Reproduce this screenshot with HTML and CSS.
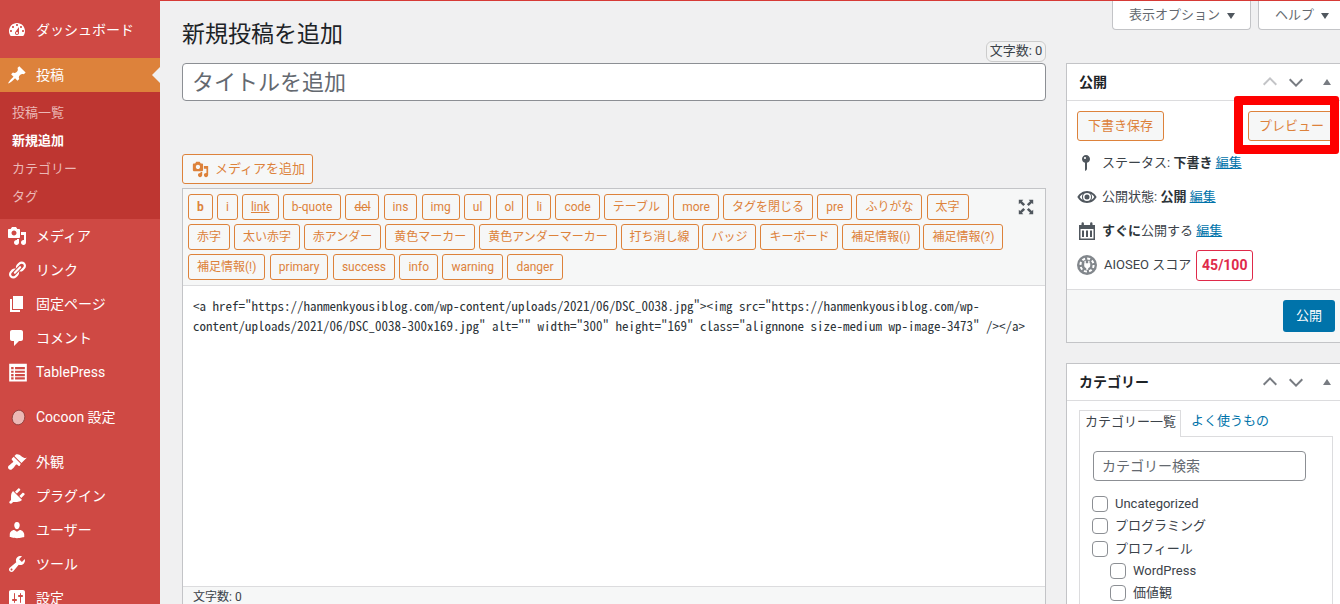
FILE: index.html
```html
<!DOCTYPE html>
<html lang="ja">
<head>
<meta charset="utf-8">
<title>新規投稿を追加</title>
<link rel="stylesheet" href="styles.css">
</head>
<body>
<div class="app">
  <aside class="side">
    <nav class="menu">
      <a class="item"><svg class="ic" viewBox="0 0 20 20"><path d="M3.76 16h12.48c1.1-1.37 1.76-3.11 1.76-5 0-4.42-3.58-8-8-8s-8 3.58-8 8c0 1.89.66 3.63 1.76 5zM10 4c.55 0 1 .45 1 1s-.45 1-1 1-1-.45-1-1 .45-1 1-1zM6 6c.55 0 1 .45 1 1s-.45 1-1 1-1-.45-1-1 .45-1 1-1zm8 0c.55 0 1 .45 1 1s-.45 1-1 1-1-.45-1-1 .45-1 1-1zm-5.37 5.55L12 7v6c0 1.1-.9 2-2 2s-2-.9-2-2c0-.57.24-1.08.63-1.45zM4 10c.55 0 1 .45 1 1s-.45 1-1 1-1-.45-1-1 .45-1 1-1zm12 0c.55 0 1 .45 1 1s-.45 1-1 1-1-.45-1-1 .45-1 1-1zm-5 3c0-.55-.45-1-1-1s-1 .45-1 1 .45 1 1 1 1-.45 1-1z"/></svg><span>ダッシュボード</span></a>
      <div class="sep"></div>
      <a class="item active"><svg class="ic" viewBox="0 0 20 20"><path d="M10.44 3.02l1.82-1.82 6.36 6.35-1.83 1.82c-1.05-.68-2.48-.57-3.41.36l-.75.75c-.92.93-1.04 2.35-.35 3.41l-1.83 1.82-2.41-2.41-2.8 2.79c-.42.42-3.38 2.71-3.8 2.29s1.86-3.39 2.28-3.81l2.79-2.79L4.1 9.36l1.83-1.82c1.05.69 2.48.57 3.4-.36l.75-.75c.93-.92 1.05-2.35.36-3.41z"/></svg><span>投稿</span></a>
      <div class="sub">
        <a>投稿一覧</a>
        <a class="cur">新規追加</a>
        <a>カテゴリー</a>
        <a>タグ</a>
      </div>
      <a class="item"><svg class="ic" viewBox="0 0 20 20"><path d="M13 11V4c0-.55-.45-1-1-1h-1.67L9 1H5L3.67 3H2c-.55 0-1 .45-1 1v7c0 .55.45 1 1 1h10c.55 0 1-.45 1-1zM7 4.5c1.38 0 2.5 1.12 2.5 2.5S8.38 9.5 7 9.5 4.5 8.38 4.5 7 5.62 4.5 7 4.5zM14 6h5v10.5c0 1.38-1.12 2.5-2.5 2.5S14 17.88 14 16.5s1.12-2.5 2.5-2.5c.17 0 .34.02.5.05V9h-3V6zm-4 8.05V13h2v3.5c0 1.38-1.12 2.5-2.5 2.5S7 17.88 7 16.5 8.12 14 9.5 14c.17 0 .34.02.5.05z"/></svg><span>メディア</span></a>
      <a class="item"><svg class="ic" viewBox="0 0 20 20"><path d="M17.74 2.76c1.68 1.69 1.68 4.41 0 6.1l-1.53 1.52c-1.12 1.12-2.7 1.47-4.14 1.09l2.62-2.61.76-.77.76-.76c.84-.84.84-2.2 0-3.04-.84-.85-2.2-.85-3.04 0l-.77.76-3.38 3.38c-.37-1.44-.02-3.02 1.1-4.14l1.52-1.53c1.69-1.68 4.42-1.68 6.1 0zM8.59 13.43l5.34-5.34c.42-.42.42-1.1 0-1.52-.44-.43-1.13-.39-1.53 0l-5.33 5.34c-.42.42-.42 1.1 0 1.52.44.43 1.13.39 1.52 0zm-.76 2.29l4.14-4.15c.38 1.44.03 3.02-1.09 4.14l-1.52 1.53c-1.69 1.68-4.41 1.68-6.1 0-1.68-1.68-1.68-4.42 0-6.1l1.53-1.52c1.12-1.12 2.7-1.47 4.14-1.1l-4.14 4.15c-.85.84-.85 2.2 0 3.05.84.84 2.2.84 3.04 0z"/></svg><span>リンク</span></a>
      <a class="item"><svg class="ic" viewBox="0 0 20 20"><path d="M6 15V2h10v13H6zm-1 1h8v2H3V5h2v11z"/></svg><span>固定ページ</span></a>
      <a class="item"><svg class="ic" viewBox="0 0 20 20"><path d="M5 2h9c1.1 0 2 .9 2 2v7c0 1.1-.9 2-2 2h-2l-5 5v-5H5c-1.1 0-2-.9-2-2V4c0-1.1.9-2 2-2z"/></svg><span>コメント</span></a>
      <a class="item"><svg class="ic" viewBox="0 0 20 20"><path transform="translate(1.2 .8) scale(.98)" fill-rule="evenodd" d="M1 1h18v18H1zM3 4.400v2.200h2.500V4.400zm4 0v2.200h10V4.400zM3 8v2.200h2.500V8zm4 0v2.200h10V8zM3 11.400v2.200h2.500v-2.200zm4 0v2.200h10v-2.200zM3 14.800V17h2.500v-2.200zm4 0V17h10v-2.200z"/></svg><span>TablePress</span></a>
      <div class="sep"></div>
      <a class="item"><svg class="ic" viewBox="0 0 20 20"><ellipse class="egg" cx="11.500" cy="10.500" rx="6.200" ry="7.400" transform="rotate(16 11.500 10.500)"/></svg><span>Cocoon 設定</span></a>
      <div class="sep"></div>
      <a class="item"><svg class="ic" viewBox="0 0 20 20"><path d="M14.48 11.06L7.41 3.99l1.5-1.5c.5-.56 2.3-.47 3.51.32 1.21.8 1.43 1.28 2.91 2.1 1.18.64 2.45 1.26 4.45.85zm-.71.71L6.7 4.7 4.93 6.47c-.39.39-.39 1.02 0 1.41l1.06 1.06c.39.39.39 1.03 0 1.42-.6.6-1.43 1.11-2.21 1.69-.35.26-.7.53-1.01.84C1.43 13.71.96 14.6 1 15.3c.04.7.3 1.3.7 1.7.4.4 1 .66 1.7.7.7.04 1.6-.43 2.97-1.78.3-.31.58-.66.84-1.01.58-.78 1.09-1.61 1.69-2.21.39-.39 1.03-.39 1.42 0l1.06 1.06c.39.39 1.02.39 1.41 0z"/></svg><span>外観</span></a>
      <a class="item"><svg class="ic" viewBox="0 0 20 20"><path d="M13.11 4.36L9.87 7.6 8 5.73l3.24-3.24c.35-.34 1.05-.2 1.56.32.52.51.66 1.21.31 1.55zm-8 1.77l.91-1.12 9.01 9.01-1.19.84c-.71.71-2.63 1.16-3.82 1.16H6.14L4.9 17.26c-.59.59-1.54.59-2.12 0-.59-.58-.59-1.53 0-2.12l1.24-1.24v-3.88c0-1.13.4-3.19 1.09-3.89zm7.26 3.97l3.24-3.24c.34-.35 1.04-.21 1.55.31.52.51.66 1.21.31 1.55l-3.24 3.25z"/></svg><span>プラグイン</span></a>
      <a class="item"><svg class="ic" viewBox="0 0 20 20"><path d="M10 9.25c-2.27 0-2.73-3.44-2.73-3.44C7 4.02 7.82 2 9.97 2c2.16 0 2.98 2.02 2.71 3.81 0 0-.41 3.44-2.68 3.44zm0 2.57L12.72 10c2.39 0 4.52 2.33 4.52 4.53v2.49s-3.65 1.13-7.24 1.13c-3.65 0-7.24-1.13-7.24-1.13v-2.49c0-2.25 1.94-4.48 4.47-4.48z"/></svg><span>ユーザー</span></a>
      <a class="item"><svg class="ic" viewBox="0 0 20 20"><path d="M16.68 9.77c-1.34 1.34-3.3 1.67-4.95.99l-5.41 6.52c-.99.99-2.59.99-3.58 0s-.99-2.59 0-3.57l6.52-5.42c-.68-1.65-.35-3.61.99-4.95 1.28-1.28 3.12-1.62 4.72-1.06l-2.89 2.89 2.82 2.82 2.86-2.87c.53 1.58.18 3.39-1.08 4.65zM3.81 16.21c.4.39 1.04.39 1.43 0 .4-.4.4-1.04 0-1.43-.39-.4-1.03-.4-1.43 0-.39.39-.39 1.03 0 1.43z"/></svg><span>ツール</span></a>
      <a class="item"><svg class="ic" viewBox="0 0 20 20"><path d="M18 16V4c0-1.1-.9-2-2-2H4c-1.1 0-2 .9-2 2v12c0 1.1.9 2 2 2h12c1.1 0 2-.9 2-2zM8 11h1c.55 0 1 .45 1 1s-.45 1-1 1H8v1.5c0 .28-.22.5-.5.5s-.5-.22-.5-.5V13H6c-.55 0-1-.45-1-1s.45-1 1-1h1V5.5c0-.28.22-.5.5-.5s.5.22.5.5V11zm5-2h-1c-.55 0-1-.45-1-1s.45-1 1-1h1V5.5c0-.28.22-.5.5-.5s.5.22.5.5V7h1c.55 0 1 .45 1 1s-.45 1-1 1h-1v5.5c0 .28-.22.5-.5.5s-.5-.22-.5-.5V9z"/></svg><span>設定</span></a>
    </nav>
  </aside>
  <main class="main">
    <div class="screen-tabs">
      <button class="stab">表示オプション<i class="tri"></i></button>
      <button class="stab stab-help">ヘルプ<i class="tri"></i></button>
    </div>
    <div class="cols">
      <section class="left">
        <h1 class="title">新規投稿を追加</h1>
        <div class="count-tip">文字数: 0</div>
        <div class="title-input">タイトルを追加</div>
        <button class="media-btn"><svg class="media-ic" viewBox="0 0 20 20"><path d="M13 11V4c0-.55-.45-1-1-1h-1.67L9 1H5L3.67 3H2c-.55 0-1 .45-1 1v7c0 .55.45 1 1 1h10c.55 0 1-.45 1-1zM7 4.5c1.38 0 2.5 1.12 2.5 2.5S8.38 9.5 7 9.5 4.5 8.38 4.5 7 5.62 4.5 7 4.5zM14 6h5v10.5c0 1.38-1.12 2.5-2.5 2.5S14 17.88 14 16.5s1.12-2.5 2.5-2.5c.17 0 .34.02.5.05V9h-3V6zm-4 8.05V13h2v3.5c0 1.38-1.12 2.5-2.5 2.5S7 17.88 7 16.5 8.12 14 9.5 14c.17 0 .34.02.5.05z"/></svg>メディアを追加</button>
        <div class="editor">
          <div class="toolbar">
            <div class="qt">
              <div class="qt-row"><button class="qb strong">b</button><button class="qb">i</button><button class="qb under">link</button><button class="qb">b-quote</button><button class="qb strike">del</button><button class="qb">ins</button><button class="qb">img</button><button class="qb">ul</button><button class="qb">ol</button><button class="qb">li</button><button class="qb">code</button><button class="qb">テーブル</button><button class="qb">more</button><button class="qb">タグを閉じる</button><button class="qb">pre</button><button class="qb">ふりがな</button><button class="qb">太字</button></div>
              <div class="qt-row tight"><button class="qb">赤字</button><button class="qb">太い赤字</button><button class="qb">赤アンダー</button><button class="qb">黄色マーカー</button><button class="qb">黄色アンダーマーカー</button><button class="qb">打ち消し線</button><button class="qb">バッジ</button><button class="qb">キーボード</button><button class="qb">補足情報(i)</button><button class="qb">補足情報(?)</button></div>
              <div class="qt-row wide"><button class="qb">補足情報(!)</button><button class="qb">primary</button><button class="qb">success</button><button class="qb">info</button><button class="qb">warning</button><button class="qb">danger</button></div>
            </div>
            <svg class="fs" viewBox="0 0 20 20"><path d="M2 2h5L5.500 3.500 9 7 7 9 3.500 5.500 2 7zM18 2v5l-1.500-1.500L13 9l-2-2 3.500-3.500L13 2zM2 18v-5l1.500 1.500L7 11l2 2-3.500 3.500L7 18zM18 18h-5l1.500-1.500L11 13l2-2 3.500 3.500L18 13z"/></svg>
          </div>
          <div class="code">&lt;a href="https://hanmenkyousiblog.com/wp-content/uploads/2021/06/DSC_0038.jpg"&gt;&lt;img src="https://hanmenkyousiblog.com/wp-content/uploads/2021/06/DSC_0038-300x169.jpg" alt="" width="300" height="169" class="alignnone size-medium wp-image-3473" /&gt;&lt;/a&gt;</div>
          <div class="status">文字数: 0</div>
        </div>
      </section>
      <section class="right">
        <div class="box">
          <div class="box-head"><h2>公開</h2><span class="handles"><svg viewBox="0 0 20 20" class="chev up"><path d="M3 13l7-7 7 7"/></svg><svg viewBox="0 0 20 20" class="chev"><path d="M3 7l7 7 7-7"/></svg><i class="tri-up"></i></span></div>
          <div class="pub-actions">
            <button class="btn">下書き保存</button>
            <button class="btn preview">プレビュー</button>
          </div>
          <div class="pub-row"><svg class="pi pin" viewBox="0 0 20 20"><path d="M14 6c0 1.860-1.280 3.410-3 3.860V16c0 1-2 2-2 2V9.860c-1.720-.45-3-2-3-3.860 0-2.210 1.790-4 4-4s4 1.790 4 4zM8 5c0 .55.45 1 1 1s1-.45 1-1-.45-1-1-1-1 .45-1 1z"/></svg><span>ステータス: <b>下書き</b> <a>編集</a></span></div>
          <div class="pub-row"><svg class="pi" viewBox="0 0 20 20"><path fill-rule="evenodd" d="M10 4C5.500 4 2 7 .3 10 2 13 5.500 16 10 16s8-3 9.700-6C18 7 14.500 4 10 4zm0 2a4 4 0 1 1 0 8 4 4 0 0 1 0-8zm-7.300 4c.8-1.200 1.800-2.200 3-3-.5.9-.7 2-.7 3s.2 2.100.7 3c-1.200-.8-2.200-1.800-3-3zm14.600 0c-.8 1.200-1.800 2.200-3 3 .5-.9.7-2 .7-3s-.2-2.100-.7-3c1.200.8 2.200 1.800 3 3zM10 7.500a2.500 2.500 0 1 1 0 5 2.500 2.500 0 0 1 0-5z"/></svg><span>公開状態: <b>公開</b> <a>編集</a></span></div>
          <div class="pub-row"><svg class="pi" viewBox="0 0 20 20"><path fill-rule="evenodd" d="M2 4h2.500V2.500a1.200 1.200 0 0 1 2.400 0V4h6.200V2.500a1.200 1.200 0 0 1 2.400 0V4H18v15H2zM3.500 8v9.500h13V8zM5 9.500h2V16H5zm4 0h2V16H9zm4 0h2V16h-2z"/></svg><span><b>すぐに</b>公開する <a>編集</a></span></div>
          <div class="pub-row seo"><svg class="pi gear" viewBox="0 0 20 20"><circle class="g-bg" cx="10" cy="10" r="10"/><circle class="g-teeth" cx="10" cy="10" r="6.600"/><path class="g-plug" d="M7.500 5.800h1.300v2.400h2.400V5.800h1.300v2.400h.7v2.300c0 1.300-1 2.300-2 2.500v1.800H9.200v-1.800c-1-.2-2-1.200-2-2.500V8.200h.3z"/></svg><span class="seo-label">AIOSEO スコア</span><span class="score">45/100</span></div>
          <div class="pub-foot"><button class="publish">公開</button></div>
        </div>
        <div class="box">
          <div class="box-head"><h2>カテゴリー</h2><span class="handles"><svg viewBox="0 0 20 20" class="chev"><path d="M3 13l7-7 7 7"/></svg><svg viewBox="0 0 20 20" class="chev"><path d="M3 7l7 7 7-7"/></svg><i class="tri-up"></i></span></div>
          <div class="cat">
            <div class="tabs"><span class="tab on">カテゴリー一覧</span><a class="tab">よく使うもの</a></div>
            <div class="panel">
              <div class="search">カテゴリー検索</div>
              <ul class="cats">
                <li><i class="cb"></i>Uncategorized</li>
                <li><i class="cb"></i>プログラミング</li>
                <li><i class="cb"></i>プロフィール</li>
                <li class="child"><i class="cb"></i>WordPress</li>
                <li class="child"><i class="cb"></i>価値観</li>
              </ul>
            </div>
          </div>
        </div>
      </section>
    </div>
  </main>
</div>
<div class="mark"></div>
</body>
</html>
```
FILE: styles.css
```css
* { box-sizing: border-box; }
html, body { margin: 0; height: 100%; overflow: hidden; }
body {
  background: #f0f0f1;
  color: #3c434a;
  font: 13px/1.4 Roboto, "Noto Sans CJK JP", sans-serif;
}
button { font: inherit; margin: 0; cursor: pointer; white-space: nowrap; }
a { text-decoration: none; }
h1, h2 { margin: 0; font-weight: 400; }
ul { list-style: none; margin: 0; padding: 0; }

.app { display: flex; height: 604px; width: 1340px; overflow: hidden; }

/* Sidebar */
.side { flex: 0 0 160px; background: #cf4944; padding-top: 13px; }
.menu { display: flex; flex-direction: column; }
.item {
  display: flex; align-items: center; height: 34px; color: #fff;
  font-size: 14px; padding-left: 7px; gap: 9px; position: relative;
}
.item > span { line-height: 1; }
.ic { width: 20px; height: 20px; fill: #fff; flex: none; }
.egg { fill: #ecb8b5; stroke: #7d3330; stroke-width: .7; }
.sep { height: 11px; }
.active { background: #dd823b; }
.active::after {
  content: ""; position: absolute; right: 0; top: 9px;
  border: 8px solid transparent; border-right-color: #f0f0f1; border-left-width: 0;
}
.sub {
  background: #be3631; display: flex; flex-direction: column;
  padding: 7px 0 8px; height: 127px;
}
.sub a { color: #ebb8b6; height: 28px; line-height: 28px; padding-left: 12px; font-size: 13px; }
.sub a.cur { color: #fff; font-weight: 700; }

/* Main */
.main { flex: 1; min-width: 0; border-top: 1px solid #d63a36; padding-left: 22px; position: relative; }
.screen-tabs { position: absolute; top: 0; left: 952px; display: flex; gap: 7px; }
.stab {
  height: 29px; background: #fff; border: 1px solid #c3c4c7; border-top: 0;
  border-radius: 0 0 4px 4px; color: #646970; padding: 0 16px; font-size: 13px;
  display: flex; align-items: center; gap: 7px; width: 139px;
}
.stab-help { width: 100px; }
.tri { border: 4.500px solid transparent; border-top: 6px solid #50575e; border-bottom: 0; margin-top: 1px; }

.cols { display: flex; gap: 20px; align-items: flex-start; width: 1164px; }
.left { flex: 0 0 864px; position: relative; }
.right { flex: 0 0 280px; padding-top: 62px; display: flex; flex-direction: column; gap: 20px; }

.title { font-size: 23px; line-height: 29px; color: #1d2327; padding-top: 19px; height: 62px; }
.count-tip {
  position: absolute; right: 0; top: 40px; height: 21px; width: 60px;
  background: #f3f3f3; border: 1px solid #ccc; border-radius: 6px;
  font-size: 13px; line-height: 18px; text-align: center; color: #3c434a; white-space: nowrap;
}
.title-input {
  height: 38px; background: #fff; border: 1px solid #8c8f94; border-radius: 4px;
  font-size: 22px; line-height: 38px; color: #646970; padding-left: 9px;
}
.media-btn {
  display: flex; align-items: center; gap: 6px; margin-top: 53px; height: 30px; width: 131px;
  padding: 0 0 0 9px; background: #f6f7f7; color: #dd823b; border: 1px solid #dd823b;
  border-radius: 3px; font-size: 13px;
}
.media-ic { width: 17px; height: 17px; fill: #dd823b; flex: none; }

.editor { margin-top: 4px; background: #fff; border: 1px solid #c3c4c7; border-bottom: 0; height: 420px; display: flex; flex-direction: column; }
.toolbar { display: flex; background: #f6f7f7; border-bottom: 1px solid #dcdcde; height: 97px; padding: 5px 0 0 5px; position: relative; flex: none; }
.qt { display: flex; flex-direction: column; gap: 4px; }
.qt-row { display: flex; gap: 4.150px; }
.qt-row.tight { gap: 3.900px; }
.qt-row.wide { gap: 4.450px; }
.qb {
  height: 26px; padding: 0 8px; background: #f6f7f7; border: 1px solid #dd823b;
  border-radius: 3px; color: #dd823b; font-size: 12px; line-height: 24px;
}
.strong { font-weight: 700; }
.under { text-decoration: underline; }
.strike { text-decoration: line-through; }
.fs { position: absolute; right: 10px; top: 9px; width: 18px; height: 18px; fill: #50575e; }
.code {
  flex: 1; padding: 10px 20px 10px 10px; font: 13px/19.500px "Noto Sans Mono CJK JP", "Liberation Mono", monospace; color: #2c3338;
}
.status { height: 22px; background: #f6f7f7; border-top: 1px solid #dcdcde; font-size: 12px; line-height: 21px; padding-left: 10px; color: #3c434a; flex: none; }

/* Boxes */
.box { background: #fff; border: 1px solid #c3c4c7; width: 280px; }
.box-head { position: relative; height: 37px; display: flex; align-items: center; border-bottom: 1px solid #dcdcde; padding-left: 12px; }
.box-head h2 { font-size: 14px; font-weight: 700; color: #1d2327; padding-top: 1px; }
.handles { display: flex; align-items: center; position: absolute; left: 194px; gap: 8px; }
.chev { width: 18px; height: 18px; fill: none; stroke: #787c82; stroke-width: 2.200; }
.chev.up { stroke: #c3c4c7; }
.tri-up { border: 4.500px solid transparent; border-bottom: 6px solid #787c82; border-top: 0; margin-left: 10px; }

.pub-actions { display: flex; justify-content: space-between; padding: 10px 10px 0; }
.btn {
  height: 30px; padding: 0 10px; background: #f6f7f7; border: 1px solid #dd823b;
  border-radius: 3px; color: #dd823b; font-size: 13px;
}
.pub-actions .preview { width: 87px; }
.pub-row { display: flex; align-items: center; gap: 5px; height: 34px; padding-left: 10px; font-size: 13px; }
.pub-actions + .pub-row { margin-top: 5px; }
.pub-row b { color: #2c3338; }
.pub-row a { color: #0073aa; text-decoration: underline; }
.pi { width: 20px; height: 20px; flex: none; fill: #50575e; }
.pin { margin-left: -1px; margin-right: 1px; }
.seo-label { margin-left: 2px; margin-right: 0; }
.score { border: 1px solid #df2a4a; border-radius: 3px; color: #df2a4a; font-weight: 700; font-size: 14px; height: 31px; width: 57px; line-height: 29px; text-align: center; }
.g-bg { fill: #82878c; }
.g-teeth { fill: none; stroke: #fff; stroke-width: 2; stroke-dasharray: 3 2.180; }
.g-plug { fill: #fff; }
.pub-foot { margin-top: 7px; height: 53px; border-top: 1px solid #dcdcde; background: #f6f7f7; padding: 10px 10px 0; display: flex; justify-content: flex-end; }
.publish { height: 32px; width: 52px; background: #0073aa; border: 0; border-radius: 3px; color: #fff; font-size: 13px; }

.cat { padding: 9px 12px 0; height: 300px; }
.tabs { display: flex; height: 26px; position: relative; }
.tab { padding: 0 5px; line-height: 21px; height: 26px; font-size: 13px; color: #0073aa; white-space: nowrap; }
.tab.on { background: #fff; color: #3c434a; border: 1px solid #dcdcde; border-bottom: 0; width: 102px; height: 27px; position: relative; z-index: 1; }
.tab + .tab { margin-left: 5px; }
.panel { border: 1px solid #dcdcde; padding: 14px 13px; height: 300px; }
.search { width: 213px; height: 30px; border: 1px solid #8c8f94; border-radius: 4px; padding-left: 8px; line-height: 28px; font-size: 14px; color: #646970; }
.cats { margin-top: 12px; }
.cats li { display: flex; align-items: center; gap: 7px; height: 22.300px; font-size: 13px; margin-left: -1px; }
.cats .child { padding-left: 18px; }
.cb { width: 16px; height: 16px; border: 1px solid #8c8f94; border-radius: 4px; background: #fff; flex: none; }

/* Annotation drawn over the screenshot */
.mark {
  position: absolute; left: 1234px; top: 96px; width: 105px; height: 58px;
  border: 9px solid #fe0000; border-radius: 3px;
}
```
